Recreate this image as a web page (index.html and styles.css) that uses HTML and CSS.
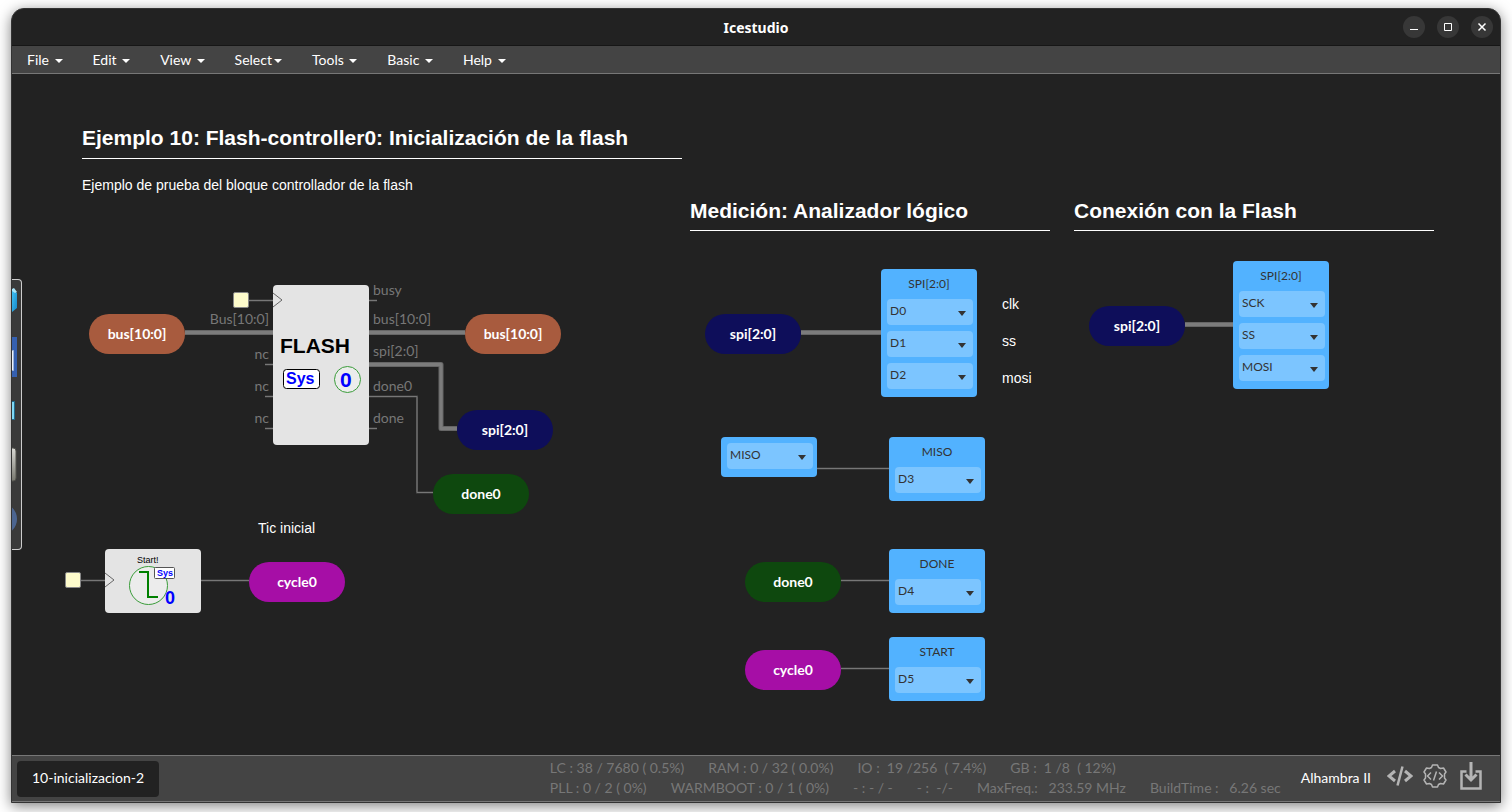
FILE: index.html
```html
<!DOCTYPE html>
<html lang="es">
<head>
<meta charset="utf-8">
<title>Icestudio</title>
<link rel="stylesheet" href="styles.css">
</head>
<body>
<div class="window">
  <header class="titlebar">
    <h1 class="app-title">Icestudio</h1>
    <div class="window-controls">
      <button class="window-button" type="button" aria-label="Minimize"><svg width="22" height="22"><path d="M7 13.5h8"/></svg></button>
      <button class="window-button" type="button" aria-label="Maximize"><svg width="22" height="22"><path d="M7.5 7.500h7v7h-7z"/></svg></button>
      <button class="window-button" type="button" aria-label="Close"><svg width="22" height="22"><path class="cross" d="M7.500 7.500l7 7M14.500 7.500l-7 7"/></svg></button>
    </div>
  </header>

  <nav class="menubar" aria-label="Menu">
    <button class="menu-item" type="button">File <span class="caret"></span></button>
    <button class="menu-item" type="button">Edit <span class="caret"></span></button>
    <button class="menu-item" type="button">View <span class="caret"></span></button>
    <button class="menu-item" type="button">Select<span class="caret"></span></button>
    <button class="menu-item" type="button">Tools <span class="caret"></span></button>
    <button class="menu-item" type="button">Basic <span class="caret"></span></button>
    <button class="menu-item" type="button">Help <span class="caret"></span></button>
  </nav>

  <main class="canvas">
    <svg class="wires" aria-hidden="true">
      <g class="thin-edge">
        <path d="M237 226.500h24M253 290.500h8M253 322.500h8M253 354.500h8M357 226.500h8M357 354.500h8M69 506.500h24M189 506.500h48M357 322.500h48v96h16M805 394.500h72M829 506.500h48M829 594.500h48"/>
      </g>
      <g class="thin-core">
        <path d="M237 226.500h24M253 290.500h8M253 322.500h8M253 354.500h8M357 226.500h8M357 354.500h8M69 506.500h24M189 506.500h48M357 322.500h48v96h16M805 394.500h72M829 506.500h48M829 594.500h48"/>
      </g>
      <g class="bus-edge">
        <path d="M173 258.500h88M357 258.500h96M357 290.500h72v64h16M789 258.500h80M1173 250.500h48"/>
      </g>
      <g class="bus-core">
        <path d="M173 258.500h88M357 258.500h96M357 290.500h72v64h16M789 258.500h80M1173 250.500h48"/>
      </g>
    </svg>

    <section class="note note-intro">
      <h2 class="note-title">Ejemplo 10: Flash-controller0: Inicialización de la flash</h2>
      <p class="note-text">Ejemplo de prueba del bloque controllador de la flash</p>
    </section>
    <section class="note note-analyzer"><h2 class="note-title compact">Medición: Analizador lógico</h2></section>
    <section class="note note-flash"><h2 class="note-title compact">Conexión con la Flash</h2></section>
    <p class="note-text tic">Tic inicial</p>
    <p class="note-text clk">clk</p>
    <p class="note-text ss">ss</p>
    <p class="note-text mosi">mosi</p>

    <span class="constant constant-flash"></span>
    <span class="constant constant-start"></span>

    <div class="block flash-block">
      <svg width="96" height="160" role="img" aria-label="FLASH">
        <path class="clock" d="M0 8l9 7-9 7"/>
        <text class="flash-name" x="7" y="68">FLASH</text>
        <rect class="sys-box" x="10.500" y="84.500" width="36" height="19" rx="3"/>
        <text class="sys-text" x="13" y="99">Sys</text>
        <circle class="ring" cx="74.500" cy="94.500" r="13"/>
        <text class="zero-text" x="67" y="102">0</text>
      </svg>
    </div>
    <div class="block start-block">
      <svg width="96" height="64" role="img" aria-label="Start">
        <path class="clock" d="M0 24l9 7-9 7"/>
        <text class="start-name" x="32" y="14">Start!</text>
        <circle class="ring" cx="43.500" cy="36.500" r="19"/>
        <path class="step" d="M34 23h9v25h10"/>
        <rect class="sys-box small" x="49.500" y="18.500" width="20" height="11" rx="1"/>
        <text class="sys-text small" x="52" y="27">Sys</text>
        <text class="zero-text small" x="60" y="55">0</text>
      </svg>
    </div>

    <span class="port port-bus-in">Bus[10:0]</span>
    <span class="port port-nc1">nc</span>
    <span class="port port-nc2">nc</span>
    <span class="port port-nc3">nc</span>
    <span class="port port-busy">busy</span>
    <span class="port port-bus">bus[10:0]</span>
    <span class="port port-spi">spi[2:0]</span>
    <span class="port port-done0">done0</span>
    <span class="port port-done">done</span>

    <div class="label rust bus-in">bus[10:0]</div>
    <div class="label rust bus-out">bus[10:0]</div>
    <div class="label navy spi-out">spi[2:0]</div>
    <div class="label green done-out">done0</div>
    <div class="label purple cycle-out">cycle0</div>
    <div class="label navy spi-probe">spi[2:0]</div>
    <div class="label navy spi-flash">spi[2:0]</div>
    <div class="label green done-probe">done0</div>
    <div class="label purple cycle-probe">cycle0</div>

    <div class="pins pins-spi-probe">
      <div class="pins-title">SPI[2:0]</div>
      <span class="pin"><select aria-label="SPI 2"><option>D0</option></select></span>
      <span class="pin"><select aria-label="SPI 1"><option>D1</option></select></span>
      <span class="pin"><select aria-label="SPI 0"><option>D2</option></select></span>
    </div>
    <div class="pins pins-spi-flash">
      <div class="pins-title">SPI[2:0]</div>
      <span class="pin"><select aria-label="Flash SPI 2"><option>SCK</option></select></span>
      <span class="pin"><select aria-label="Flash SPI 1"><option>SS</option></select></span>
      <span class="pin"><select aria-label="Flash SPI 0"><option>MOSI</option></select></span>
    </div>
    <div class="pins untitled pins-miso-in">
      <span class="pin"><select aria-label="Input pin"><option>MISO</option></select></span>
    </div>
    <div class="pins pins-miso">
      <label class="pins-title" for="pin-miso">MISO</label>
      <span class="pin"><select id="pin-miso"><option>D3</option></select></span>
    </div>
    <div class="pins pins-done">
      <label class="pins-title" for="pin-done">DONE</label>
      <span class="pin"><select id="pin-done"><option>D4</option></select></span>
    </div>
    <div class="pins pins-start">
      <label class="pins-title" for="pin-start">START</label>
      <span class="pin"><select id="pin-start"><option>D5</option></select></span>
    </div>

    <aside class="drawer" aria-label="Toolbox">
      <svg width="9" height="269" aria-hidden="true">
        <defs>
          <linearGradient id="cube" x2="1" y2="1"><stop offset="0" stop-color="#42c3f5"/><stop offset="1" stop-color="#1587c8"/></linearGradient>
          <linearGradient id="metal" x2="0" y2="1"><stop offset="0" stop-color="#d8d8d4"/><stop offset="1" stop-color="#77776f"/></linearGradient>
        </defs>
        <path fill="url(#cube)" d="M0 10l5 3v15l-5 4z"/><path fill="#a9e6fb" d="M0 9l2-1 3 4-2 1-3-2z"/>
        <path fill="#3560b0" d="M0 57h5v40H0z"/><path fill="#eef3fa" stroke="#9db4d8" d="M-3 70.500h4.500v20H-3z"/>
        <path fill="#80d8f5" stroke="#216b8c" d="M-3 121.500h5.500v18H-3z"/>
        <rect x="-8" y="168" width="12" height="33" rx="3" fill="url(#metal)" stroke="#55554f"/>
        <circle cx="-11" cy="239" r="16" fill="#4c6590"/>
      </svg>
    </aside>
  </main>

  <footer class="statusbar">
    <button class="project-tab" type="button">10-inicializacion-2</button>
    <div class="stats">
      <div class="stats-row"><span>LC : 38 / 7680 ( 0.5%)</span><span>RAM : 0 / 32 ( 0.0%)</span><span>IO :  19 /256  ( 7.4%)</span><span>GB :  1 /8  ( 12%)</span></div>
      <div class="stats-row"><span>PLL : 0 / 2 ( 0%)</span><span>WARMBOOT : 0 / 1 ( 0%)</span><span>- : - / -</span><span>- :  -/-</span><span>MaxFreq.:   233.59 MHz</span><span>BuildTime :   6.26 sec</span></div>
    </div>
    <button class="board" type="button">Alhambra II</button>
    <div class="actions">
      <button class="action" type="button" aria-label="Verify"><svg width="26" height="26" viewBox="0 0 26 26"><path stroke-width="3" d="M8 8l-6 5 6 5M18 8l6 5-6 5"/><path stroke-width="2.500" d="M15.500 3.500l-5 19"/></svg></button>
      <button class="action" type="button" aria-label="Build"><svg width="26" height="26" viewBox="0 0 26 26"><path stroke-width="1.500" stroke-linejoin="round" d="M9.500 4.500L10.500 2h5l1 2.500 2 1 3-.5 2.500 4-1.500 2v4l1.500 2-2.500 4-3-.5-2 1-1 2.500h-5l-1-2.500-2-1-3 .5-2.500-4 1.500-2v-4L2 9l2.500-4 3 .5z"/><path stroke-width="1.500" d="M9 9.500L5.500 13 9 16.500M17 9.500l3.500 3.500-3.500 3.500M14.500 8.500l-3 9"/></svg></button>
      <button class="action upload" type="button" aria-label="Upload"><svg width="22" height="28" viewBox="0 0 22 28"><path stroke-width="2.500" d="M6.500 9.500h-5v17h19v-17h-5"/><path stroke-width="3" d="M11 0v17M5.500 12.500L11 18l5.500-5.500"/></svg></button>
    </div>
  </footer>
</div>
</body>
</html>
```

FILE: styles.css
```css
* { box-sizing: border-box; }

body {
  margin: 0;
  height: 100vh;
  padding: 8px 11px 9px;
  display: flex;
  background: #fff;
  color: #fff;
  font: 14px/20px Lato, sans-serif;
  overflow: hidden;
}

button, select {
  margin: 0;
  padding: 0;
  border: 0;
  background: none;
  color: inherit;
  font: inherit;
}

h1, h2, p { margin: 0; }

.window {
  flex: 1;
  min-width: 0;
  display: flex;
  flex-direction: column;
  background: #222;
  border: 1px solid #333;
  border-radius: 13px 13px 0 0;
  box-shadow: 0 3px 14px rgba(0, 0, 0, .5);
}

.titlebar {
  height: 37px;
  display: grid;
  grid-template-columns: 1fr auto 1fr;
  align-items: center;
  border-bottom: 1px solid #161616;
}

.app-title {
  grid-column: 2;
  padding-top: 2px;
  font: bold 14px/20px "Noto Sans", sans-serif;
}

.window-controls {
  display: flex;
  justify-content: flex-end;
  gap: 12px;
  padding-right: 7px;
}

.window-button {
  width: 22px;
  height: 22px;
  border-radius: 50%;
  background: #373737;
}

.window-button svg { display: block; fill: none; stroke: #fff; }
.window-button .cross { stroke-width: 1.5; }

.menubar {
  height: 28px;
  display: flex;
  background: #444;
  border-bottom: 1px solid #777;
}

.menu-item { padding: 0 15px; }

.caret {
  display: inline-block;
  margin-left: 2px;
  vertical-align: middle;
  border: 4px solid transparent;
  border-top-color: #fff;
  border-bottom: 0;
}

/* Diagram: every node has its own place on the free canvas */
.canvas {
  position: relative;
  flex: 1;
  overflow: hidden;
}

.canvas > * { position: absolute; }

.wires { left: 0; top: 0; width: 100%; height: 100%; fill: none; }
.thin-edge { stroke: #484848; stroke-width: 2; }
.thin-core { stroke: #777; stroke-width: 1; }
.bus-edge { stroke: #666; stroke-width: 5; stroke-linejoin: round; }
.bus-core { stroke: #7c7c7c; stroke-width: 3; stroke-linejoin: round; }

.note { width: 360px; font-family: "Liberation Sans", sans-serif; }
.note-title {
  padding-bottom: 8px;
  border-bottom: 1px solid #fff;
  font-size: 21px;
  line-height: 24px;
}
.note-title.compact { padding-bottom: 7px; }
.note-text { font: 14px/20px "Liberation Sans", sans-serif; }
.note-intro { left: 70px; top: 52px; width: 600px; }
.note-intro .note-text { margin-top: 16px; }
.note-analyzer { left: 678px; top: 125px; }
.note-flash { left: 1062px; top: 125px; }
.tic { left: 246px; top: 444px; }
.clk { left: 990px; top: 220px; }
.ss { left: 990px; top: 257px; }
.mosi { left: 990px; top: 294px; }

.constant {
  width: 16px;
  height: 16px;
  border: 1px solid #888;
  border-radius: 2px;
  background: #fdfbcb;
}
.constant-flash { left: 221px; top: 218px; }
.constant-start { left: 53px; top: 498px; }

.block {
  width: 96px;
  border-radius: 4px;
  background: #e4e4e4;
}
.block svg { display: block; font-family: "Liberation Sans", sans-serif; }
.flash-block { left: 261px; top: 211px; }
.start-block { left: 93px; top: 475px; }
.clock { fill: none; stroke: #666; }
.flash-name { font-size: 21px; font-weight: bold; }
.start-name { font-size: 9px; }
.sys-box { fill: #fff; stroke: #000; }
.sys-box.small { stroke: #555; }
.sys-text { fill: #00f; font-size: 16px; font-weight: bold; }
.sys-text.small { font-size: 9px; }
.ring { fill: #ececec; stroke: #3a9c3a; }
.zero-text { fill: #00f; font-size: 21px; font-weight: bold; }
.zero-text.small { font-size: 18px; }
.step { fill: none; stroke: #008000; stroke-width: 2; }

.port { color: #777; font-size: 14px; line-height: 20px; left: 361px; }
.port-bus-in, .port-nc1, .port-nc2, .port-nc3 { left: 157px; width: 100px; text-align: right; }
.port-bus-in { top: 235px; }
.port-nc1 { top: 270px; }
.port-nc2 { top: 302px; }
.port-nc3 { top: 334px; }
.port-busy { top: 206px; }
.port-bus { top: 235px; }
.port-spi { top: 267px; }
.port-done0 { top: 302px; }
.port-done { top: 334px; }

.label {
  width: 96px;
  border-radius: 20px;
  font-weight: bold;
  line-height: 40px;
  text-align: center;
}
.rust { background: #a85b3e; }
.navy { background: #0e0e5a; }
.green { background: #0e480e; }
.purple { background: #a60ea6; }
.bus-in { left: 77px; top: 240px; }
.bus-out { left: 453px; top: 240px; }
.spi-out { left: 445px; top: 336px; }
.done-out { left: 421px; top: 400px; }
.cycle-out { left: 237px; top: 488px; }
.spi-probe { left: 693px; top: 240px; }
.spi-flash { left: 1077px; top: 232px; }
.done-probe { left: 733px; top: 488px; }
.cycle-probe { left: 733px; top: 576px; }

.pins {
  width: 96px;
  padding: 0 4px 8px 6px;
  display: flex;
  flex-direction: column;
  gap: 6px;
  border-radius: 4px;
  background: #52b2ff;
  color: #333;
  font-size: 12px;
}
.pins.untitled { padding-top: 6px; }
.pins-title { height: 24px; padding-right: 2px; line-height: 30px; text-align: center; }
.pin { position: relative; display: flex; }
.pin select {
  width: 100%;
  height: 26px;
  padding: 0 20px 2px 3px;
  appearance: none;
  border-radius: 4px;
  background: #7cc5ff;
}
.pin::after {
  content: "";
  position: absolute;
  right: 7px;
  top: 12px;
  border: 4px solid transparent;
  border-top: 5px solid #333;
  border-bottom: 0;
  pointer-events: none;
}
.pins-spi-probe { left: 869px; top: 195px; }
.pins-spi-flash { left: 1221px; top: 187px; }
.pins-miso-in { left: 709px; top: 363px; }
.pins-miso { left: 877px; top: 363px; }
.pins-done { left: 877px; top: 475px; }
.pins-start { left: 877px; top: 563px; }

.drawer {
  left: 0;
  top: 205px;
  background: #3a3a3a;
  border: 1px solid #ccc;
  border-left: 0;
  border-radius: 0 4px 4px 0;
}
.drawer svg { display: block; }

.statusbar {
  height: 47px;
  display: flex;
  align-items: center;
  padding: 0 18px 0 5px;
  background: #444;
  border-top: 1px solid #777;
  border-bottom: 1px solid #777;
}

.project-tab {
  height: 36px;
  padding: 0 15px 2px;
  border-radius: 4px;
  background: #222;
}

.stats {
  margin-left: auto;
  padding-bottom: 1px;
  color: #777;
}
.stats-row { display: flex; gap: 24px; }
.stats-row span { white-space: pre; }

.board { margin-left: 20px; padding-bottom: 2px; }

.actions {
  display: flex;
  align-items: center;
  gap: 9px;
  margin-left: 16px;
  padding-bottom: 6px;
}
.action svg { display: block; fill: none; stroke: #b4b4b4; }
.upload { margin-left: 3px; }
```
